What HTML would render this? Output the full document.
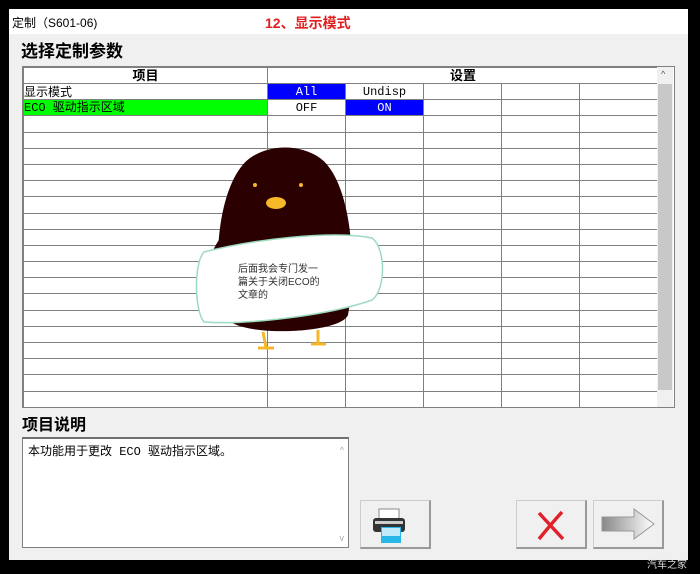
<!DOCTYPE html>
<html><head><meta charset="utf-8"><style>
body{margin:0;width:700px;height:574px;background:#000;position:relative;overflow:hidden;font-family:"Liberation Sans","Noto Sans CJK SC",sans-serif}
.win{position:absolute;left:9px;top:9px;width:679px;height:551px;background:#f0f0f0}
.title{position:absolute;left:0;top:0;width:679px;height:25px;background:#fff;font-size:12px}
.abs{position:absolute}
table{border-collapse:collapse;table-layout:fixed;position:absolute;left:23px;top:67px;width:635px;font-family:"Liberation Mono","Noto Sans CJK SC",monospace;font-size:12px}
td{border:1px solid #808080;height:15.2px;padding:0;background:#fff;text-align:center;line-height:14px;overflow:hidden;white-space:nowrap}
th{border:1px solid #808080;background:#fff;height:15px;padding:0;line-height:15px;font-size:13px;font-family:"Liberation Sans","Noto Sans CJK SC",sans-serif}
.b{background:#0000ff;color:#fff}
.btn{position:absolute;top:500px;width:68px;height:46px;background:#f0f0f0;border:1px solid #ccc;border-right:2px solid #999;border-bottom:2px solid #999}
</style></head><body>
<div class="win">
<div class="title"><span class="abs" style="left:3px;top:5px">定制（S601-06)</span><span class="abs" style="left:256px;top:4px;color:#e02020;font-weight:bold;font-size:14px">12、显示模式</span></div>
<div class="abs" style="left:12px;top:28px;font-size:17px;font-weight:bold">选择定制参数</div>
</div>
<div class="abs" style="left:22px;top:66px;width:651px;height:340px;border:1px solid #808080;background:#fff"></div>
<table>
<colgroup><col style="width:244px"><col style="width:78px"><col style="width:78px"><col style="width:78px"><col style="width:78px"><col style="width:79px"></colgroup>
<tr><th>项目</th><th colspan="5">设置</th></tr>
<tr><td style="text-align:left;font-family:'Liberation Sans','Noto Sans CJK SC',sans-serif">显示模式</td><td class="b">All</td><td>Undisp</td><td></td><td></td><td></td></tr>
<tr><td style="text-align:left;background:#00ff00">ECO 驱动指示区域</td><td>OFF</td><td class="b">ON</td><td></td><td></td><td></td></tr>
<tr><td></td><td></td><td></td><td></td><td></td><td></td></tr>
<tr><td></td><td></td><td></td><td></td><td></td><td></td></tr>
<tr><td></td><td></td><td></td><td></td><td></td><td></td></tr>
<tr><td></td><td></td><td></td><td></td><td></td><td></td></tr>
<tr><td></td><td></td><td></td><td></td><td></td><td></td></tr>
<tr><td></td><td></td><td></td><td></td><td></td><td></td></tr>
<tr><td></td><td></td><td></td><td></td><td></td><td></td></tr>
<tr><td></td><td></td><td></td><td></td><td></td><td></td></tr>
<tr><td></td><td></td><td></td><td></td><td></td><td></td></tr>
<tr><td></td><td></td><td></td><td></td><td></td><td></td></tr>
<tr><td></td><td></td><td></td><td></td><td></td><td></td></tr>
<tr><td></td><td></td><td></td><td></td><td></td><td></td></tr>
<tr><td></td><td></td><td></td><td></td><td></td><td></td></tr>
<tr><td></td><td></td><td></td><td></td><td></td><td></td></tr>
<tr><td></td><td></td><td></td><td></td><td></td><td></td></tr>
<tr><td></td><td></td><td></td><td></td><td></td><td></td></tr>
<tr><td></td><td></td><td></td><td></td><td></td><td></td></tr>
<tr><td></td><td></td><td></td><td></td><td></td><td></td></tr>
</table>
<div class="abs" style="left:657px;top:67px;width:16px;height:340px;background:#f0f0f0"></div>
<div class="abs" style="left:658px;top:84px;width:14px;height:306px;background:#c8c8c8"></div>
<div class="abs" style="left:661px;top:69px;font-size:9px;color:#555">^</div>
<svg class="abs" style="left:190px;top:140px" width="200" height="220">
<path d="M35 175 C20 120 30 40 60 18 C80 4 110 4 130 18 C160 40 168 120 158 175 C150 195 40 198 35 175 Z" fill="#2b0000"/>
<path d="M38 90 C15 110 10 150 25 160 L45 150 Z" fill="#2b0000"/>
<path d="M150 88 C172 110 176 140 168 150 L150 150 Z" fill="#2b0000"/>
<ellipse cx="86" cy="63" rx="10" ry="6" fill="#f5b829"/>
<circle cx="65" cy="45" r="2" fill="#f5b829"/><circle cx="111" cy="45" r="2" fill="#f5b829"/>
<path d="M73 192 L76 208 M68 208 L84 208" stroke="#f5b829" stroke-width="3"/>
<path d="M128 190 L128 203 M121 204 L136 204" stroke="#f5b829" stroke-width="3"/>
<path d="M14 112 C60 100 140 90 182 98 C196 108 196 150 182 160 C140 175 60 185 14 182 C4 170 4 122 14 112 Z" fill="#fff" stroke="#9ddbc0" stroke-width="1.5"/>
<text x="48" y="132" font-size="10" fill="#333">后面我会专门发一</text>
<text x="48" y="145" font-size="10" fill="#333">篇关于关闭ECO的</text>
<text x="48" y="158" font-size="10" fill="#333">文章的</text>
</svg>
<div class="abs" style="left:22px;top:411px;font-size:16px;font-weight:bold">项目说明</div>
<div class="abs" style="left:22px;top:437px;width:325px;height:108px;background:#fff;border:1px solid #808080;border-top:2px solid #707070;font-size:12px"><span style="position:absolute;left:5px;top:3px;font-family:'Liberation Mono','Noto Sans CJK SC',monospace">本功能用于更改 ECO 驱动指示区域。</span><span style="position:absolute;right:4px;top:6px;color:#aaa;font-size:9px">^</span><span style="position:absolute;right:4px;bottom:4px;color:#aaa;font-size:9px">v</span></div>
<div class="btn" style="left:360px"><svg width="68" height="46"><rect x="18" y="8" width="20" height="10" fill="#fff" stroke="#888"/><rect x="12" y="17" width="32" height="14" rx="3" fill="#333"/><rect x="14" y="20" width="28" height="3" fill="#ccc"/><rect x="20" y="26" width="20" height="16" fill="#29b6e8"/><rect x="21" y="27" width="18" height="8" fill="#bfe9f8"/></svg></div>
<div class="btn" style="left:516px"><svg width="68" height="46"><path d="M22 12 L46 38 M45 11 Q35 22 22 38" stroke="#e0202a" stroke-width="3.5" fill="none"/></svg></div>
<div class="btn" style="left:593px"><svg width="68" height="46"><defs><linearGradient id="g"><stop offset="0" stop-color="#888"/><stop offset="1" stop-color="#fff"/></linearGradient></defs><path d="M8 16 H40 V8 L60 23 L40 38 V30 H8 Z" fill="url(#g)" stroke="#999"/></svg></div>
<div class="abs" style="left:647px;top:556px;font-size:10px;color:#ddd">汽车之家</div>
</body></html>
